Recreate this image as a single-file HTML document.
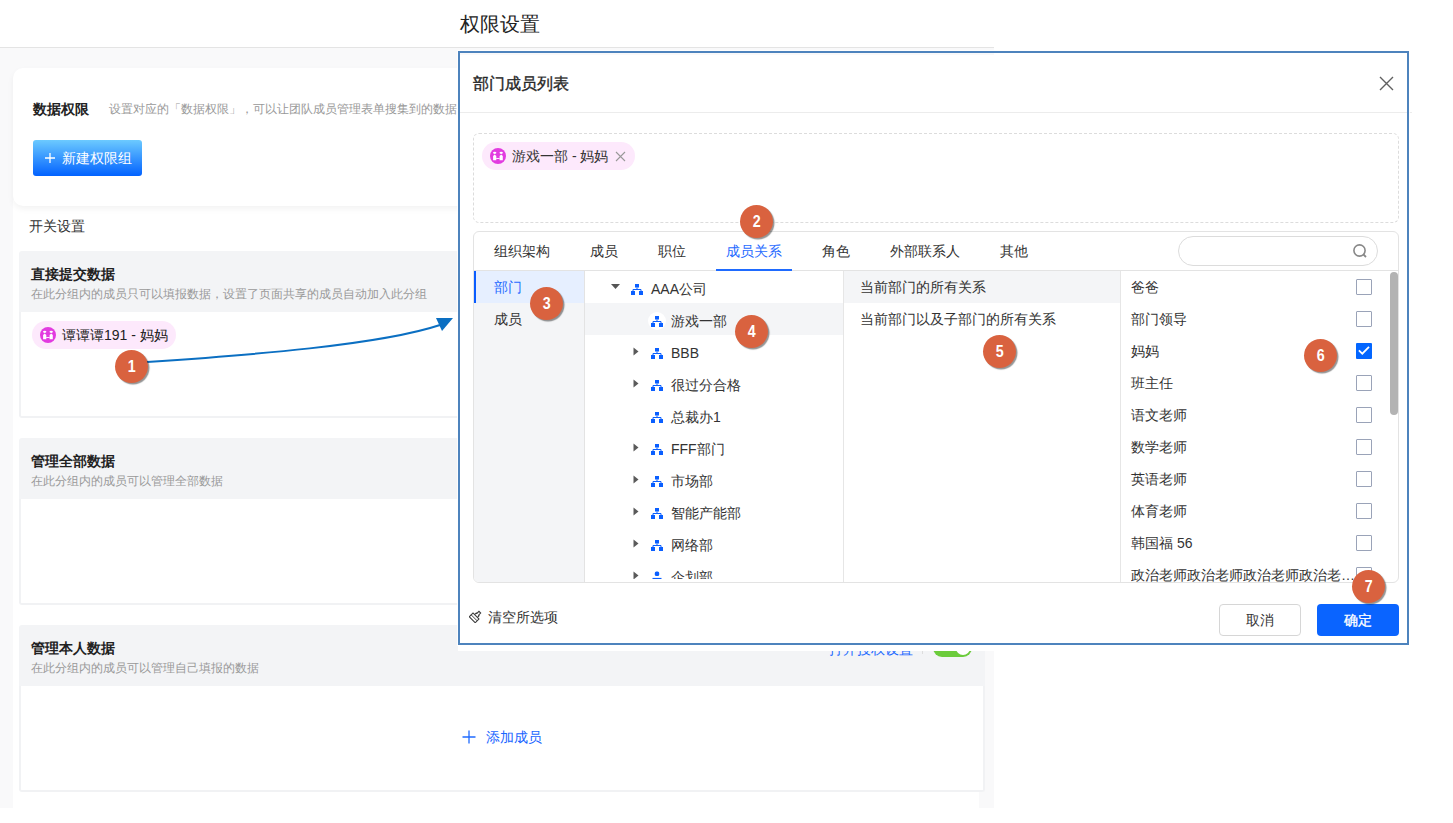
<!DOCTYPE html>
<html><head><meta charset="utf-8">
<style>
*{box-sizing:border-box;margin:0;padding:0}
html,body{width:1453px;height:823px;overflow:hidden;background:#fff;font-family:"Liberation Sans",sans-serif;color:#333;position:relative}
.a{position:absolute;white-space:nowrap}
.t14{font-size:14px;line-height:20px;height:20px}
.t12{font-size:12px;line-height:18px;height:18px}
.grp-h{position:absolute;left:19px;width:966px;height:61px;background:#f3f4f6;border-radius:3px 3px 0 0}
.grp-b{position:absolute;left:19px;width:966px;height:106px;background:#fff;border:2px solid #f1f2f4;border-top:none;border-radius:0 0 3px 3px}
.gt{position:absolute;left:12px;font-size:14px;font-weight:bold;color:#222;line-height:20px}
.gd{position:absolute;left:12px;font-size:12px;color:#999;line-height:18px}
.badge{position:absolute;z-index:6;width:33px;height:33px;border-radius:50%;background:#d9623f;color:#fff;font-weight:bold;font-size:17px;line-height:33px;text-align:center;box-shadow:1.5px 1.5px 1px rgba(0,0,0,0.42);font-family:"Liberation Sans",sans-serif}
.badge span{display:inline-block;transform:scaleX(0.84)}
.chip{position:absolute;height:28px;border-radius:14px;background:#fde9fc;font-size:14px;line-height:28px;color:#222}
.tab{position:absolute;top:241px;font-size:14px;line-height:20px;color:#333}
.row{position:absolute;font-size:14px;line-height:20px;color:#333}
.cb{position:absolute;left:1356px;width:16px;height:16px;border:1px solid #9aa3b8;background:#fff;border-radius:1px}
</style></head><body>

<!-- page header -->
<div class="a" style="left:460px;top:11px;font-size:20px;line-height:26px;color:#222">权限设置</div>
<div class="a" style="left:0;top:47px;width:994px;height:1px;background:#e4e4e4"></div>

<!-- page gray bg -->
<div class="a" style="left:0;top:48px;width:994px;height:760px;background:#f9f9fa"></div>

<!-- section white container -->
<div class="a" style="left:13px;top:200px;width:966px;height:608px;background:#fff"></div>

<!-- data permission card -->
<div class="a" style="left:13px;top:68px;width:966px;height:138px;background:#fff;border-radius:10px;box-shadow:0 3px 6px rgba(0,0,0,0.05)">
  <div class="a" style="left:20px;top:31px;font-size:14px;font-weight:bold;line-height:20px;color:#222">数据权限</div>
  <div class="a" style="left:96px;top:32px;font-size:12px;line-height:18px;color:#999">设置对应的「数据权限」，可以让团队成员管理表单搜集到的数据</div>
  <div class="a" style="left:20px;top:72px;width:109px;height:36px;border-radius:3px;background:linear-gradient(#6ccaff,#0262ff);color:#fff;font-size:14px;line-height:36px">
    <svg style="position:absolute;left:12px;top:13px" width="10" height="10" viewBox="0 0 10 10"><path d="M5,0 V10 M0,5 H10" stroke="#fff" stroke-width="1.3"/></svg><span style="position:absolute;left:29px;top:0">新建权限组</span>
  </div>
</div>

<div class="a t14" style="left:29px;top:216px;color:#333">开关设置</div>

<!-- group 1 -->
<div class="grp-h" style="top:251px">
  <div class="gt" style="top:13px">直接提交数据</div>
  <div class="gd" style="top:34px">在此分组内的成员只可以填报数据，设置了页面共享的成员自动加入此分组</div>
</div>
<div class="grp-b" style="top:312px">
  <div class="chip" style="left:11px;top:9px;width:144px">
    <svg style="position:absolute;left:8px;top:6px" width="16" height="16" viewBox="0 0 16 16"><circle cx="8" cy="8" r="8" fill="#e23be0"/><ellipse cx="4.7" cy="4.8" rx="1.7" ry="1.15" fill="#fff"/><ellipse cx="11.2" cy="4.8" rx="1.7" ry="1.15" fill="#fff"/><path d="M4.6,6.6 L6.3,8 V12.3 H3.1 V8 Z" fill="#fff"/><path d="M11.2,6.6 L12.8,8 V12.3 H9.6 V8 Z" fill="#fff"/><rect x="6.2" y="10.1" width="3.4" height="0.9" fill="#fff"/></svg>
    <span style="position:absolute;left:30px;top:0">谭谭谭191 - 妈妈</span>
  </div>
</div>

<!-- group 2 -->
<div class="grp-h" style="top:438px">
  <div class="gt" style="top:13px">管理全部数据</div>
  <div class="gd" style="top:34px">在此分组内的成员可以管理全部数据</div>
</div>
<div class="grp-b" style="top:499px"></div>

<!-- group 3 -->
<div class="grp-h" style="top:625px">
  <div class="gt" style="top:13px">管理本人数据</div>
  <div class="gd" style="top:34px">在此分组内的成员可以管理自己填报的数据</div>
  <div class="a" style="left:810px;top:14px;font-size:14px;line-height:20px;color:#1f6bff">打开授权设置</div>
  <div class="a" style="left:903px;top:19px;width:1px;height:10px;background:#ddd"></div>
  <div class="a" style="left:914px;top:14px;width:39px;height:18px;border-radius:9px;background:#6ccc3c"><div class="a" style="left:23px;top:2px;width:14px;height:14px;border-radius:50%;background:#fff"></div></div>
</div>
<div class="grp-b" style="top:686px">
  <svg class="a" style="left:441px;top:44px" width="14" height="14" viewBox="0 0 14 14"><path d="M7,0.5 V13.5 M0.5,7 H13.5" stroke="#1f6bff" stroke-width="1.3"/></svg>
  <div class="a" style="left:465px;top:41px;font-size:14px;line-height:20px;color:#1a66ff">添加成员</div>
</div>

<!-- arrow -->
<svg class="a" style="left:0;top:0" width="1453" height="823">
  <path d="M147,362 C250,355 380,345 440,325" stroke="#0b6fc2" stroke-width="2" fill="none"/>
  <path d="M453,318 L436,318 L442,331 Z" fill="#0b6fc2"/>
</svg>
<div class="badge" style="left:115px;top:350px"><span>1</span></div>

<!-- dialog -->
<div class="a" style="left:458px;top:55px;width:954px;height:596px;background:#fff"></div>
<div class="a" style="left:458px;top:51px;width:951px;height:594px;border:2px solid #4d83bd;z-index:5;box-shadow:0 0 0 1px rgba(255,255,255,0.8)"></div>

<div class="a" style="left:473px;top:73px;font-size:16px;line-height:22px;color:#262626;-webkit-text-stroke:0.35px #262626">部门成员列表</div>
<svg class="a" style="left:1379px;top:76px" width="15" height="15" viewBox="0 0 15 15"><path d="M1,1 L14,14 M14,1 L1,14" stroke="#606060" stroke-width="1.4"/></svg>
<div class="a" style="left:460px;top:112px;width:952px;height:1px;background:#ececec"></div>

<!-- selected box -->
<div class="a" style="left:473px;top:133px;width:926px;height:90px;border:1px dashed #dcdcdc;border-radius:6px"></div>
<div class="chip" style="left:482px;top:142px;width:153px">
  <svg style="position:absolute;left:8px;top:6px" width="16" height="16" viewBox="0 0 16 16"><circle cx="8" cy="8" r="8" fill="#e23be0"/><ellipse cx="4.7" cy="4.8" rx="1.7" ry="1.15" fill="#fff"/><ellipse cx="11.2" cy="4.8" rx="1.7" ry="1.15" fill="#fff"/><path d="M4.6,6.6 L6.3,8 V12.3 H3.1 V8 Z" fill="#fff"/><path d="M11.2,6.6 L12.8,8 V12.3 H9.6 V8 Z" fill="#fff"/><rect x="6.2" y="10.1" width="3.4" height="0.9" fill="#fff"/></svg>
  <span style="position:absolute;left:30px;top:0;color:#333">游戏一部 - 妈妈</span>
  <svg style="position:absolute;left:133px;top:9px" width="11" height="11" viewBox="0 0 11 11"><path d="M1,1 L10,10 M10,1 L1,10" stroke="#999" stroke-width="1.1"/></svg>
</div>

<!-- panel -->
<div class="a" style="left:473px;top:231px;width:926px;height:352px;border:1px solid #e3e3e3;border-radius:6px;overflow:hidden">
  <div class="a" style="left:0;top:38px;width:924px;height:1px;background:#e3e3e3"></div>
  <div class="a" style="left:0;top:39px;width:111px;height:312px;background:#f4f5f7;border-right:1px solid #e3e3e3"></div>
  <div class="a" style="left:0;top:39px;width:110px;height:32px;background:#e6efff;border-left:2px solid #0a5cff"></div>
  <div class="a" style="left:369px;top:39px;width:278px;height:312px;border-left:1px solid #e6e6e6;border-right:1px solid #e6e6e6"></div>
  <div class="a" style="left:111px;top:71px;width:258px;height:32px;background:#f4f5f7"></div>
  <div class="a" style="left:370px;top:39px;width:276px;height:32px;background:#f4f5f7"></div>
  <div class="a" style="left:916px;top:40px;width:8px;height:143px;border-radius:4px;background:#b3b3b3"></div>
</div>

<!-- tabs -->
<div class="tab" style="left:494px">组织架构</div>
<div class="tab" style="left:590px">成员</div>
<div class="tab" style="left:658px">职位</div>
<div class="tab" style="left:726px;color:#1f6bff">成员关系</div>
<div class="tab" style="left:822px">角色</div>
<div class="tab" style="left:890px">外部联系人</div>
<div class="tab" style="left:1000px">其他</div>
<div class="a" style="left:716px;top:269px;width:76px;height:2px;background:#1f6bff"></div>
<div class="a" style="left:1178px;top:236px;width:200px;height:30px;border:1px solid #dcdcdc;border-radius:15px"></div>
<svg class="a" style="left:1352px;top:243px" width="16" height="16" viewBox="0 0 16 16"><circle cx="7.5" cy="7.5" r="5.6" stroke="#888" stroke-width="1.6" fill="none"/><path d="M11.5,11.5 L14,14" stroke="#888" stroke-width="1.8"/></svg>

<!-- left col -->
<div class="row" style="left:494px;top:277px;color:#1f6bff">部门</div>
<div class="row" style="left:494px;top:309px">成员</div>

<!-- tree -->
<div class="a" style="left:648px;top:312px;width:18px;height:18px;border-radius:50%;background:#fff"></div>

<svg class="a" style="left:611px;top:284px" width="9" height="6"><path d="M0,0 L9,0 L4.5,5 Z" fill="#555"/></svg>
<svg class="a" style="left:631px;top:284px" width="12" height="12" viewBox="0 0 12 12"><rect x="4" y="0" width="4" height="3.5" fill="#0a5fff"/><path d="M6,3.5 V5.5 M2,7 V5.5 H10 V7" stroke="#0a5fff" stroke-width="1" fill="none"/><rect x="0" y="7" width="4" height="4" fill="#0a5fff"/><rect x="8" y="7" width="4" height="4" fill="#0a5fff"/></svg>
<svg class="a" style="left:651px;top:316px" width="12" height="12" viewBox="0 0 12 12"><rect x="4" y="0" width="4" height="3.5" fill="#0a5fff"/><path d="M6,3.5 V5.5 M2,7 V5.5 H10 V7" stroke="#0a5fff" stroke-width="1" fill="none"/><rect x="0" y="7" width="4" height="4" fill="#0a5fff"/><rect x="8" y="7" width="4" height="4" fill="#0a5fff"/></svg>
<svg class="a" style="left:651px;top:348px" width="12" height="12" viewBox="0 0 12 12"><rect x="4" y="0" width="4" height="3.5" fill="#0a5fff"/><path d="M6,3.5 V5.5 M2,7 V5.5 H10 V7" stroke="#0a5fff" stroke-width="1" fill="none"/><rect x="0" y="7" width="4" height="4" fill="#0a5fff"/><rect x="8" y="7" width="4" height="4" fill="#0a5fff"/></svg>
<svg class="a" style="left:633px;top:347px" width="6" height="9" viewBox="0 0 6 9"><path d="M0.5,0.5 L5.5,4.5 L0.5,8.5 Z" fill="#5a5a5a"/></svg>
<svg class="a" style="left:651px;top:380px" width="12" height="12" viewBox="0 0 12 12"><rect x="4" y="0" width="4" height="3.5" fill="#0a5fff"/><path d="M6,3.5 V5.5 M2,7 V5.5 H10 V7" stroke="#0a5fff" stroke-width="1" fill="none"/><rect x="0" y="7" width="4" height="4" fill="#0a5fff"/><rect x="8" y="7" width="4" height="4" fill="#0a5fff"/></svg>
<svg class="a" style="left:633px;top:379px" width="6" height="9" viewBox="0 0 6 9"><path d="M0.5,0.5 L5.5,4.5 L0.5,8.5 Z" fill="#5a5a5a"/></svg>
<svg class="a" style="left:651px;top:412px" width="12" height="12" viewBox="0 0 12 12"><rect x="4" y="0" width="4" height="3.5" fill="#0a5fff"/><path d="M6,3.5 V5.5 M2,7 V5.5 H10 V7" stroke="#0a5fff" stroke-width="1" fill="none"/><rect x="0" y="7" width="4" height="4" fill="#0a5fff"/><rect x="8" y="7" width="4" height="4" fill="#0a5fff"/></svg>
<svg class="a" style="left:651px;top:444px" width="12" height="12" viewBox="0 0 12 12"><rect x="4" y="0" width="4" height="3.5" fill="#0a5fff"/><path d="M6,3.5 V5.5 M2,7 V5.5 H10 V7" stroke="#0a5fff" stroke-width="1" fill="none"/><rect x="0" y="7" width="4" height="4" fill="#0a5fff"/><rect x="8" y="7" width="4" height="4" fill="#0a5fff"/></svg>
<svg class="a" style="left:633px;top:443px" width="6" height="9" viewBox="0 0 6 9"><path d="M0.5,0.5 L5.5,4.5 L0.5,8.5 Z" fill="#5a5a5a"/></svg>
<svg class="a" style="left:651px;top:476px" width="12" height="12" viewBox="0 0 12 12"><rect x="4" y="0" width="4" height="3.5" fill="#0a5fff"/><path d="M6,3.5 V5.5 M2,7 V5.5 H10 V7" stroke="#0a5fff" stroke-width="1" fill="none"/><rect x="0" y="7" width="4" height="4" fill="#0a5fff"/><rect x="8" y="7" width="4" height="4" fill="#0a5fff"/></svg>
<svg class="a" style="left:633px;top:475px" width="6" height="9" viewBox="0 0 6 9"><path d="M0.5,0.5 L5.5,4.5 L0.5,8.5 Z" fill="#5a5a5a"/></svg>
<svg class="a" style="left:651px;top:508px" width="12" height="12" viewBox="0 0 12 12"><rect x="4" y="0" width="4" height="3.5" fill="#0a5fff"/><path d="M6,3.5 V5.5 M2,7 V5.5 H10 V7" stroke="#0a5fff" stroke-width="1" fill="none"/><rect x="0" y="7" width="4" height="4" fill="#0a5fff"/><rect x="8" y="7" width="4" height="4" fill="#0a5fff"/></svg>
<svg class="a" style="left:633px;top:507px" width="6" height="9" viewBox="0 0 6 9"><path d="M0.5,0.5 L5.5,4.5 L0.5,8.5 Z" fill="#5a5a5a"/></svg>
<svg class="a" style="left:651px;top:540px" width="12" height="12" viewBox="0 0 12 12"><rect x="4" y="0" width="4" height="3.5" fill="#0a5fff"/><path d="M6,3.5 V5.5 M2,7 V5.5 H10 V7" stroke="#0a5fff" stroke-width="1" fill="none"/><rect x="0" y="7" width="4" height="4" fill="#0a5fff"/><rect x="8" y="7" width="4" height="4" fill="#0a5fff"/></svg>
<svg class="a" style="left:633px;top:539px" width="6" height="9" viewBox="0 0 6 9"><path d="M0.5,0.5 L5.5,4.5 L0.5,8.5 Z" fill="#5a5a5a"/></svg>
<div class="row" style="left:651px;top:279px">AAA公司</div>
<div class="row" style="left:671px;top:311px">游戏一部</div>
<div class="row" style="left:671px;top:343px">BBB</div>
<div class="row" style="left:671px;top:375px">很过分合格</div>
<div class="row" style="left:671px;top:407px">总裁办1</div>
<div class="row" style="left:671px;top:439px">FFF部门</div>
<div class="row" style="left:671px;top:471px">市场部</div>
<div class="row" style="left:671px;top:503px">智能产能部</div>
<div class="row" style="left:671px;top:535px">网络部</div>

<!-- relations -->
<div class="row" style="left:860px;top:277px">当前部门的所有关系</div>
<div class="row" style="left:860px;top:309px">当前部门以及子部门的所有关系</div>

<!-- members -->
<div class="row" style="left:1131px;top:277px">爸爸</div>
<div class="row" style="left:1131px;top:309px">部门领导</div>
<div class="row" style="left:1131px;top:341px">妈妈</div>
<div class="row" style="left:1131px;top:373px">班主任</div>
<div class="row" style="left:1131px;top:405px">语文老师</div>
<div class="row" style="left:1131px;top:437px">数学老师</div>
<div class="row" style="left:1131px;top:469px">英语老师</div>
<div class="row" style="left:1131px;top:501px">体育老师</div>
<div class="row" style="left:1131px;top:533px">韩国福 56</div>

<div class="cb" style="top:279px"></div>
<div class="cb" style="top:311px"></div>
<div class="a" style="left:1356px;top:343px;width:16px;height:16px;background:#0366ff;border-radius:1px"><svg width="16" height="16" style="position:absolute;left:0;top:0"><path d="M2.9,7.4 L6.3,10.7 L13,3.9" stroke="#fff" stroke-width="1.8" fill="none"/></svg></div>
<div class="cb" style="top:375px"></div>
<div class="cb" style="top:407px"></div>
<div class="cb" style="top:439px"></div>
<div class="cb" style="top:471px"></div>
<div class="cb" style="top:503px"></div>
<div class="cb" style="top:535px"></div>

<!-- clipped last row -->
<div class="a" style="left:474px;top:560px;width:924px;height:19px;overflow:hidden">
  <svg class="a" style="left:159px;top:11px" width="6" height="9" viewBox="0 0 6 9"><path d="M0.5,0.5 L5.5,4.5 L0.5,8.5 Z" fill="#5a5a5a"/></svg>
  <svg class="a" style="left:178px;top:11px" width="10" height="12" viewBox="0 0 10 12"><rect x="2.8" y="0.5" width="4.4" height="4.6" rx="1.6" fill="#0a5fff"/><path d="M0.5,7.6 H9.5" stroke="#0a5fff" stroke-width="1.4" fill="none"/></svg>
  <div class="row" style="left:197px;top:7px">企划部</div>
</div>
<div class="a" style="left:474px;top:560px;width:924px;height:22px;overflow:hidden">
  <div class="row" style="left:657px;top:5px;width:225px;overflow:hidden;text-overflow:ellipsis">政治老师政治老师政治老师政治老师政治老师</div>
  <div class="cb" style="left:882px;top:7px"></div>
</div>

<!-- footer -->
<svg class="a" style="left:469px;top:609px" width="14" height="14" viewBox="0 0 14 14"><g transform="rotate(45 7 7)" stroke="#3a3a3a" stroke-width="1.05" fill="none"><path d="M2.8,7 H11.2 V12.3 H2.8 Z"/><path d="M2.8,9.6 H11.2" stroke-width="0.9"/><path d="M5,7 V4.6 H5.8 V1.6 H8.2 V4.6 H9 V7"/></g></svg>
<div class="row" style="left:488px;top:607px">清空所选项</div>
<div class="a" style="left:1219px;top:604px;width:82px;height:32px;border:1px solid #d6d6d6;border-radius:4px;font-size:14px;line-height:30px;text-align:center;color:#333">取消</div>
<div class="a" style="left:1317px;top:604px;width:82px;height:32px;background:#0a64ff;border-radius:4px;font-size:14px;line-height:32px;text-align:center;color:#fff;-webkit-text-stroke:0.3px #fff">确定</div>

<!-- badges -->
<div class="badge" style="left:740px;top:205px"><span>2</span></div>
<div class="badge" style="left:530px;top:287px"><span>3</span></div>
<div class="badge" style="left:735px;top:315px"><span>4</span></div>
<div class="badge" style="left:983px;top:335px"><span>5</span></div>
<div class="badge" style="left:1304px;top:339px"><span>6</span></div>
<div class="badge" style="left:1352px;top:570px"><span>7</span></div>

</body></html>
